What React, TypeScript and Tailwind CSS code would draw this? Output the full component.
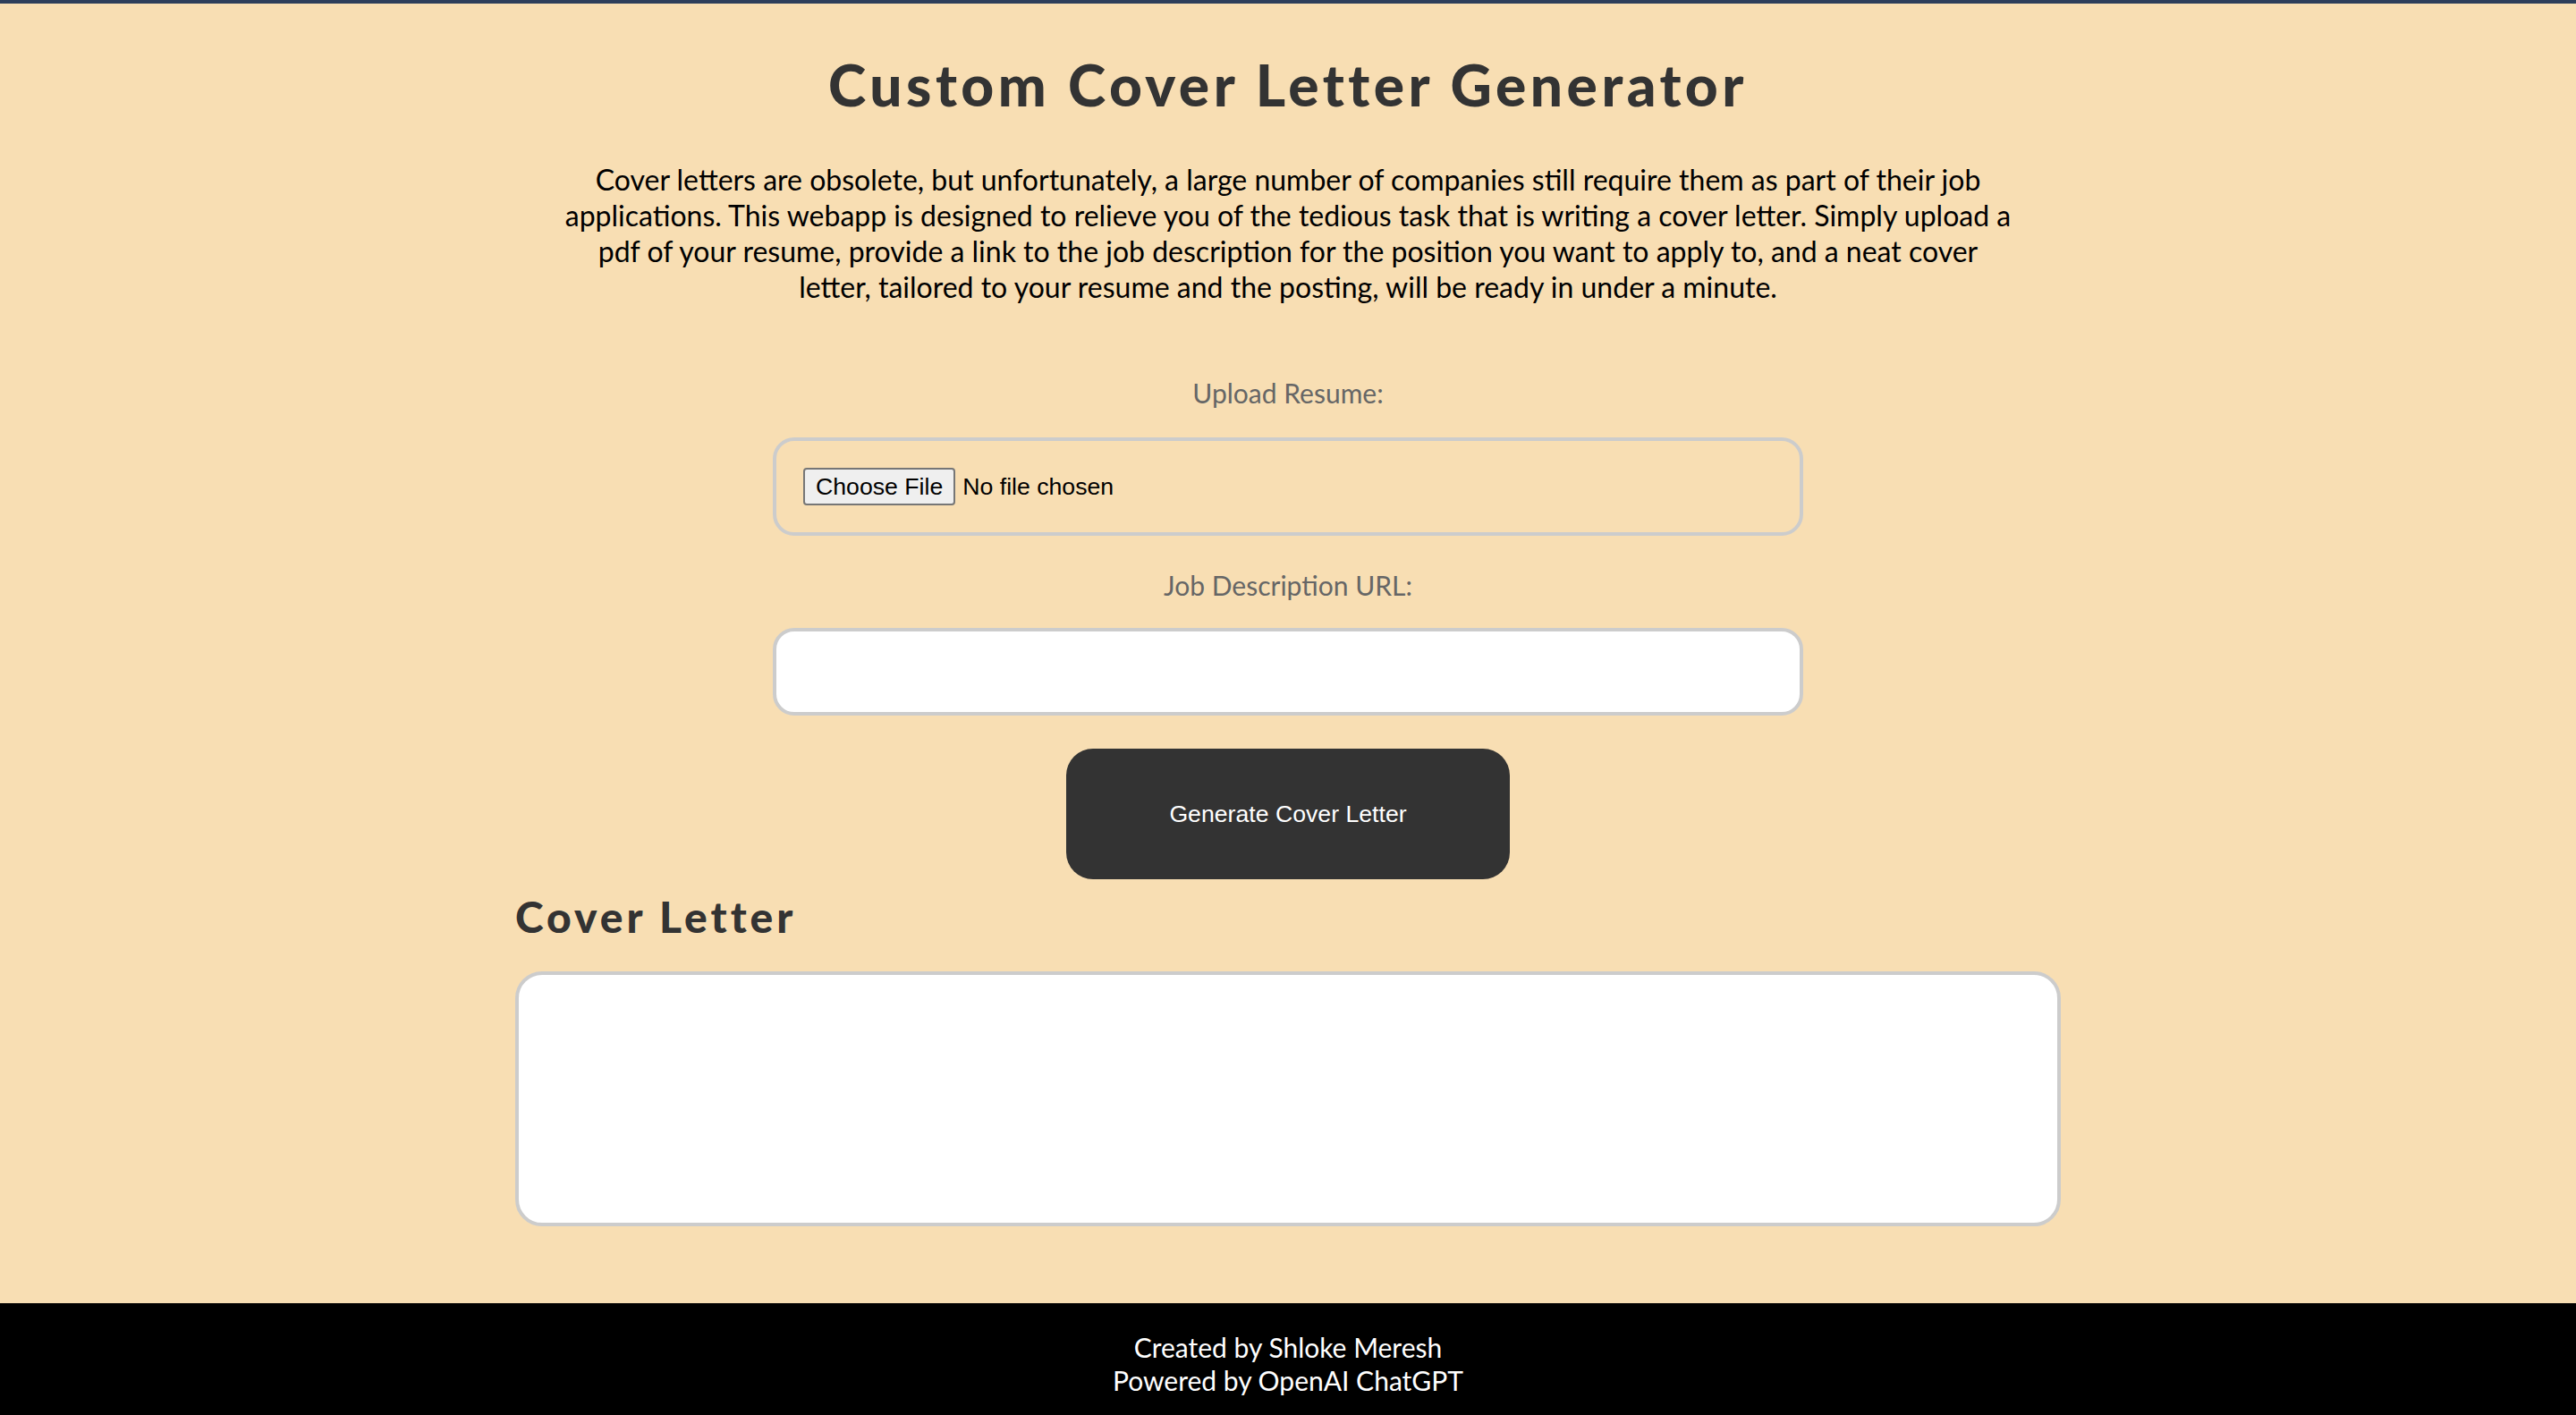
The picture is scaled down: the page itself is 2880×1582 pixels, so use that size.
export default function App() {
  return (
    <div className="min-h-screen flex flex-col bg-[#f8deb3] border-t-4 border-[#2d3e5b] font-['Lato',sans-serif]">
      <main className="flex-1 flex flex-col items-center pb-[40px]">
        <h1 className="mt-[53px] text-[64px] leading-[76px] font-black tracking-[4.5px] text-[#333]">
          Custom Cover Letter Generator
        </h1>

        <p className="mt-[48px] max-w-[1680px] text-center text-[32px] leading-[40px] text-black">
          Cover letters are obsolete, but unfortunately, a large number of companies still require them as part of their job
          <br />
          applications. This webapp is designed to relieve you of the tedious task that is writing a cover letter. Simply upload a
          <br />
          pdf of your resume, provide a link to the job description for the position you want to apply to, and a neat cover
          <br />
          letter, tailored to your resume and the posting, will be ready in under a minute.
        </p>

        <form className="w-full flex flex-col items-center mt-[78px]">
          <label htmlFor="resume" className="text-[30px] leading-[40px] text-[#666]">
            Upload Resume:
          </label>
          <input
            id="resume"
            type="file"
            className="mt-[30px] w-[40%] p-[30px] border-4 border-[#ccc] rounded-[24px] font-['Liberation_Sans',sans-serif] text-[26.67px] leading-[30px] text-black file:mr-[8px] file:px-[12px] file:py-[4px] file:border-2 file:border-[#767676] file:rounded-[4px] file:bg-[#efefef] file:text-black"
          />

          <label htmlFor="url" className="mt-[35px] text-[30px] leading-[40px] text-[#666]">
            Job Description URL:
          </label>
          <input
            id="url"
            type="text"
            className="mt-[28px] w-[40%] h-[98px] px-[30px] border-4 border-[#ccc] rounded-[24px] bg-white font-['Liberation_Sans',sans-serif] text-[26.67px] outline-none"
          />

          <button
            type="button"
            className="mt-[37px] w-[496px] h-[146px] rounded-[30px] bg-[#333] text-white font-['Liberation_Sans',sans-serif] text-[26.67px]"
          >
            Generate Cover Letter
          </button>
        </form>

        <section className="w-[60%] mt-[13px]">
          <h2 className="text-[48px] leading-[58px] font-black tracking-[4px] text-[#333]">Cover Letter</h2>
          <textarea
            readOnly
            className="mt-[32px] block w-full h-[285px] border-4 border-[#ccc] rounded-[30px] bg-white resize-none outline-none p-[20px] font-['Liberation_Sans',sans-serif] text-[26px]"
          />
        </section>
      </main>

      <footer className="bg-black text-white text-center text-[30px] leading-[37px] pt-[31px] pb-[20px]">
        <p>Created by Shloke Meresh</p>
        <p>Powered by OpenAI ChatGPT</p>
      </footer>
    </div>
  );
}
